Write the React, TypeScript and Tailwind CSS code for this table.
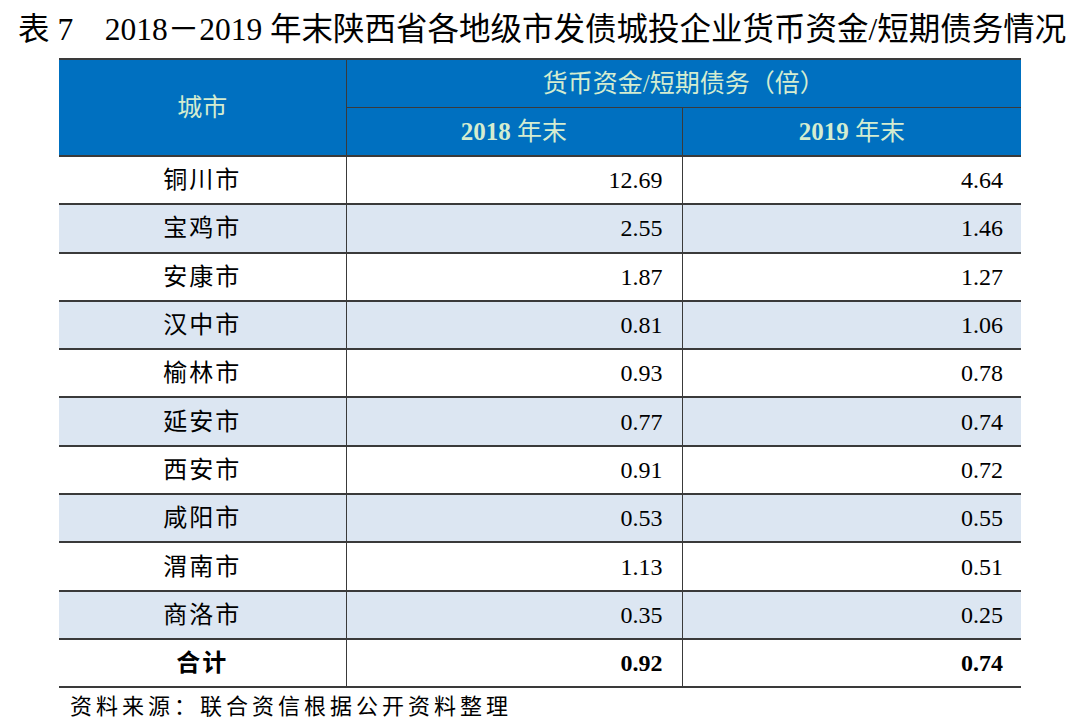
import React from "react";

const rows: [string, string, string][] = [
  ["铜川市", "12.69", "4.64"],
  ["宝鸡市", "2.55", "1.46"],
  ["安康市", "1.87", "1.27"],
  ["汉中市", "0.81", "1.06"],
  ["榆林市", "0.93", "0.78"],
  ["延安市", "0.77", "0.74"],
  ["西安市", "0.91", "0.72"],
  ["咸阳市", "0.53", "0.55"],
  ["渭南市", "1.13", "0.51"],
  ["商洛市", "0.35", "0.25"],
];

const font = { fontFamily: '"Liberation Serif", "Noto Sans CJK SC", serif' };

export default function App() {
  return (
    <div className="w-[1080px] h-[727px] bg-white text-black overflow-hidden" style={font}>
      <div className="pt-[12px] pl-[18px] h-[48px] text-[31.5px] leading-[36px] whitespace-nowrap">
        表 7　2018－2019 年末陕西省各地级市发债城投企业货币资金/短期债务情况
      </div>
      <table className="ml-[59px] mt-[10px] w-[962px] table-fixed border-collapse">
        <colgroup>
          <col className="w-[287px]" />
          <col className="w-[336px]" />
          <col className="w-[339px]" />
        </colgroup>
        <thead>
          <tr className="h-[48px] bg-[#0070c0] text-[#d4ecd0]">
            <th
              rowSpan={2}
              className="border-t-2 border-b-2 border-r-[1.5px] border-[#3a3a3a] font-normal text-[25px] text-center align-middle"
            >
              城市
            </th>
            <th
              colSpan={2}
              className="border-t-2 border-b-[1.5px] border-[#3a3a3a] font-normal text-[25px] text-center"
            >
              货币资金/短期债务（倍）
            </th>
          </tr>
          <tr className="h-[49px] bg-[#0070c0] text-[#d4ecd0]">
            <th className="border-b-2 border-r-[1.5px] border-[#3a3a3a] font-normal text-[25px] text-center">
              <span className="font-bold">2018</span> 年末
            </th>
            <th className="border-b-2 border-[#3a3a3a] font-normal text-[25px] text-center">
              <span className="font-bold">2019</span> 年末
            </th>
          </tr>
        </thead>
        <tbody>
          {rows.map((r, i) => (
            <tr key={r[0]} className={`h-[48.3px] text-[24px] ${i % 2 === 1 ? "bg-[#dce6f2]" : "bg-white"}`}>
              <td className="border-b-2 border-r-[1.5px] border-[#3a3a3a] text-center tracking-[2px]">{r[0]}</td>
              <td className="border-b-2 border-r-[1.5px] border-[#3a3a3a] text-right pr-[19px]">{r[1]}</td>
              <td className="border-b-2 border-[#3a3a3a] text-right pr-[18px]">{r[2]}</td>
            </tr>
          ))}
          <tr className="h-[48.3px] text-[24px] bg-white font-bold">
            <td className="border-b-2 border-r-[1.5px] border-[#3a3a3a] text-center tracking-[2px]">合计</td>
            <td className="border-b-2 border-r-[1.5px] border-[#3a3a3a] text-right pr-[19px]">0.92</td>
            <td className="border-b-2 border-[#3a3a3a] text-right pr-[18px]">0.74</td>
          </tr>
        </tbody>
      </table>
      <div className="pl-[70px] mt-[4px] text-[22px] leading-[30px] tracking-[4px] whitespace-nowrap">
        资料来源：联合资信根据公开资料整理
      </div>
    </div>
  );
}
